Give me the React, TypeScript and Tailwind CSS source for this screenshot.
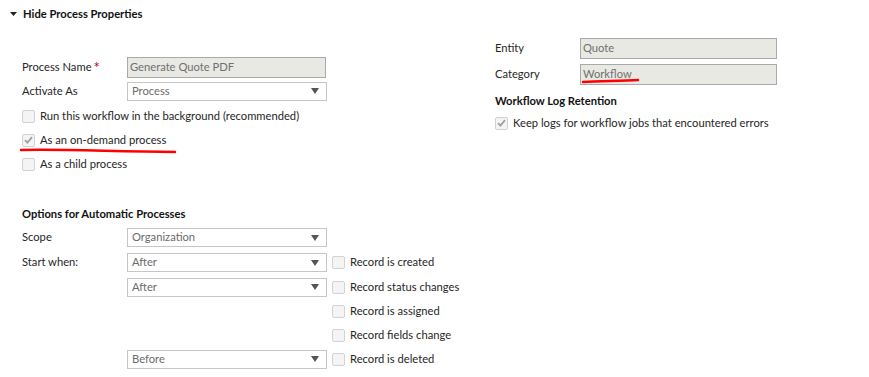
import React from "react";

// --- Small pieces ---

const Check = ({ checked = false }: { checked?: boolean }) => (
  <span className="w-[13px] h-[13px] shrink-0 rounded-[2px] border border-[#d2d2d2] bg-[#f4f4f4] flex items-center justify-center">
    {checked && (
      <svg width="9" height="8" viewBox="0 0 9 8">
        <path d="M1 4.2 L3.4 6.6 L8 1.2" fill="none" stroke="#a0a0a0" strokeWidth="1.8" />
      </svg>
    )}
  </span>
);

const CheckRow = ({ label, checked }: { label: string; checked?: boolean }) => (
  <div className="h-[24px] flex items-center gap-[5px]">
    <Check checked={checked} />
    <span>{label}</span>
  </div>
);

const Select = ({ value }: { value: string }) => (
  <div className="w-[200px] h-[19px] border border-[#c6c6c6] bg-white flex items-center justify-between pl-[4px] pr-[7px] text-[#6b6b6b]">
    <span>{value}</span>
    <svg width="8" height="6" viewBox="0 0 8 6">
      <path d="M0 0 H8 L4 6 Z" fill="#555" />
    </svg>
  </div>
);

const ReadOnly = ({ value, w }: { value: string; w: string }) => (
  <div className={`${w} h-[21px] border border-[#a9a9a9] bg-[#e9e9e4] flex items-center pl-[2px] text-[#707070]`}>
    {value}
  </div>
);

export default function App() {
  return (
    <div className="relative w-[869px] h-[377px] bg-white text-[#262626] text-[11.2px] font-['Lato',sans-serif] overflow-hidden">
      {/* Header */}
      <div className="h-[28px] flex items-center pl-[10px] gap-[6px]">
        <svg width="7" height="4" viewBox="0 0 7 4">
          <path d="M0 0 H7 L3.5 4 Z" fill="#222" />
        </svg>
        <span className="font-bold text-[#111]">Hide Process Properties</span>
      </div>

      <div className="flex">
        {/* Left column */}
        <div className="w-[473px] pl-[22px]">
          <div className="h-[27px]" />
          <div className="flex items-center h-[24px]">
            <span className="w-[105px] flex items-center">
              Process Name
              <span className="text-[#c00] text-[15px] leading-none ml-[2px] relative top-[1px]">*</span>
            </span>
            <ReadOnly value="Generate Quote PDF" w="w-[199px]" />
          </div>
          <div className="flex items-center h-[24px]">
            <span className="w-[105px]">Activate As</span>
            <Select value="Process" />
          </div>
          <div className="h-[1px]" />
          <CheckRow label="Run this workflow in the background (recommended)" />
          <CheckRow label="As an on-demand process" checked />
          <CheckRow label="As a child process" />

          <div className="h-[27px]" />
          <div className="h-[22px] flex items-center font-bold text-[#111]">Options for Automatic Processes</div>

          <div className="flex items-center h-[25px]">
            <span className="w-[105px]">Scope</span>
            <Select value="Organization" />
          </div>
          <div className="flex items-center h-[25px] gap-[5px]">
            <span className="w-[100px]">Start when:</span>
            <Select value="After" />
            <CheckRow label="Record is created" />
          </div>
          <div className="flex items-center h-[24px] gap-[5px] pl-[105px]">
            <Select value="After" />
            <CheckRow label="Record status changes" />
          </div>
          <div className="flex items-center h-[24px] pl-[310px]">
            <CheckRow label="Record is assigned" />
          </div>
          <div className="flex items-center h-[24px] pl-[310px]">
            <CheckRow label="Record fields change" />
          </div>
          <div className="flex items-center h-[24px] gap-[5px] pl-[105px]">
            <Select value="Before" />
            <CheckRow label="Record is deleted" />
          </div>
        </div>

        {/* Right column */}
        <div className="pl-[22px] pt-[7px]">
          <div className="flex items-center h-[26px]">
            <span className="w-[85px]">Entity</span>
            <ReadOnly value="Quote" w="w-[197px]" />
          </div>
          <div className="flex items-center h-[26px]">
            <span className="w-[85px]">Category</span>
            <ReadOnly value="Workflow" w="w-[197px]" />
          </div>
          <div className="h-[28px] flex items-center font-bold text-[#111]">Workflow Log Retention</div>
          <div className="flex items-center gap-[5px]">
            <Check checked />
            <span>Keep logs for workflow jobs that encountered errors</span>
          </div>
        </div>
      </div>

      {/* Hand-drawn red underlines */}
      <svg className="absolute left-0 top-0 pointer-events-none" width="869" height="377">
        <path d="M21 150 C60 149 100 151 175 152" fill="none" stroke="#f00" strokeWidth="2.5" strokeLinecap="round" />
        <path d="M583 82 C600 81 620 81 638 80" fill="none" stroke="#f00" strokeWidth="2.5" strokeLinecap="round" />
      </svg>
    </div>
  );
}
